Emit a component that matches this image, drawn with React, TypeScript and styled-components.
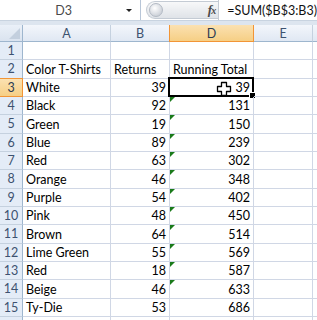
import { Fragment } from "react";
import styled, { createGlobalStyle } from "styled-components";

const GlobalStyle = createGlobalStyle`
    html, body {
        margin: 0;
        padding: 0;
        background: #ffffff;
        overflow: hidden;
    }
`;

const Page = styled.div`
    width: 317px;
    height: 320px;
    overflow: hidden;
    font-family: "Lato", "Liberation Sans", sans-serif;
`;

// formula bar
const FormulaBar = styled.div`
    display: flex;
    height: 20px;
    background: #ffffff;
`;

const NameBox = styled.div`
    width: 143px;
    box-sizing: border-box;
    border-right: 1px solid #b8c6d8;
    display: flex;
    align-items: center;
    font-size: 12.5px;
    color: #4a4a4a;
`;

const NameText = styled.span`
    flex: 1;
    text-align: center;
    padding-left: 2px;
`;

const DropArrow = styled.span`
    width: 0;
    height: 0;
    margin-right: 8px;
    border-left: 3px solid transparent;
    border-right: 3px solid transparent;
    border-top: 3px solid #202020;
`;

const Splitter = styled.div`
    width: 79px;
    display: flex;
    align-items: center;
    padding-left: 5px;
    box-sizing: border-box;
`;

const Pill = styled.div`
    flex: 1;
    height: 18px;
    border-radius: 9px 0 0 9px;
    background: linear-gradient(#f7f8f9, #dfe3e8);
    border: 1px solid #c4cbd4;
    border-right: none;
    display: flex;
    align-items: center;
    justify-content: space-between;
    box-sizing: border-box;
`;

const Knob = styled.div`
    width: 12px;
    height: 12px;
    margin-left: 2px;
    border-radius: 50%;
    background: radial-gradient(circle at 40% 35%, #ffffff, #c9ced6 80%);
    border: 1px solid #b3bac4;
`;

const Fx = styled.span`
    margin-right: 3px;
    font-family: "Liberation Serif", serif;
    font-style: italic;
    font-weight: bold;
    font-size: 13px;
    color: #4a4a4a;
    letter-spacing: -1px;

    & small {
        font-size: 10px;
    }
`;

const FormulaText = styled.div`
    flex: 1;
    display: flex;
    align-items: center;
    padding-left: 8px;
    font-size: 12.5px;
    color: #111;
    border-left: 1px solid #c4cbd4;
`;

const Band = styled.div`
    height: 5px;
    background: #dde5ef;
    border-top: 1px solid #c8d3e0;
    box-sizing: border-box;
`;

// sheet
const Sheet = styled.div`
    display: grid;
    grid-template-columns: 23px 88px 59px 84px 59px 1fr;
    grid-template-rows: 17px;
    grid-auto-rows: 18.33px;
`;

const Corner = styled.div`
    position: relative;
    background: linear-gradient(#eaf0f8, #dae3ef);
    border-right: 1px solid #9eb6ce;
    border-bottom: 1px solid #9eb6ce;
    box-sizing: border-box;

    &::after {
        content: "";
        position: absolute;
        right: 2px;
        bottom: 2px;
        border-left: 11px solid transparent;
        border-bottom: 11px solid #c3cfde;
    }
`;

const ColHead = styled.div<{ $active?: boolean }>`
    display: flex;
    align-items: center;
    justify-content: center;
    font-size: 12.5px;
    color: ${(p) => (p.$active ? "#2b3b52" : "#3d5270")};
    background: ${(p) =>
        p.$active
            ? "linear-gradient(#fbe1b1, #f6cf85)"
            : "linear-gradient(#f3f6fb, #e0e8f3)"};
    border-right: 1px solid ${(p) => (p.$active ? "#f29536" : "#c5d1df")};
    border-left: ${(p) => (p.$active ? "1px solid #f29536" : "none")};
    border-bottom: 1px solid ${(p) => (p.$active ? "#f29536" : "#9eb6ce")};
    margin-left: ${(p) => (p.$active ? "-1px" : "0")};
    box-sizing: border-box;
`;

const RowHead = styled.div<{ $active?: boolean }>`
    display: flex;
    align-items: center;
    justify-content: center;
    font-size: 12.5px;
    color: ${(p) => (p.$active ? "#2b3b52" : "#3d5270")};
    background: ${(p) => (p.$active ? "linear-gradient(#fbe1b1, #f6cf85)" : "#e4ecf7")};
    border-right: 1px solid ${(p) => (p.$active ? "#f29536" : "#9eb6ce")};
    border-bottom: 1px solid ${(p) => (p.$active ? "#f29536" : "#c5d1df")};
    border-top: ${(p) => (p.$active ? "1px solid #f29536" : "none")};
    margin-top: ${(p) => (p.$active ? "-1px" : "0")};
    box-sizing: border-box;
`;

const Cell = styled.div<{ $right?: boolean; $flag?: boolean }>`
    position: relative;
    display: flex;
    align-items: flex-end;
    justify-content: ${(p) => (p.$right ? "flex-end" : "flex-start")};
    padding: 0 3px 1px 3px;
    font-size: 12.5px;
    line-height: 15px;
    color: #000;
    white-space: nowrap;
    border-right: 1px solid #d0d7e5;
    border-bottom: 1px solid #d0d7e5;
    box-sizing: border-box;

    &::before {
        content: "";
        display: ${(p) => (p.$flag ? "block" : "none")};
        position: absolute;
        left: 0;
        top: 0;
        border-top: 5px solid #1a7a1a;
        border-right: 5px solid transparent;
    }
`;

const Selection = styled.div`
    position: absolute;
    left: -2px;
    top: -2px;
    right: -1px;
    bottom: -1px;
    border: 2px solid #000;
    pointer-events: none;
`;

const FillHandle = styled.div`
    position: absolute;
    right: -4px;
    bottom: -4px;
    width: 5px;
    height: 5px;
    background: #000;
    border: 1px solid #fff;
`;

const Cursor = styled.svg`
    position: absolute;
    left: 46px;
    top: 2px;
`;

const names = [
    "Color T-Shirts", "White", "Black", "Green", "Blue", "Red", "Orange",
    "Purple", "Pink", "Brown", "Lime Green", "Red", "Beige", "Ty-Die",
];
const returns = [39, 92, 19, 89, 63, 46, 54, 48, 64, 55, 18, 46, 53];
const totals = returns.map((_, i) => returns.slice(0, i + 1).reduce((a, b) => a + b, 0));

const App: React.FC = () => {
    const rows = Array.from({ length: 16 }, (_, i) => i + 1);
    return (
        <>
            <GlobalStyle />
            <Page>
                <FormulaBar>
                    <NameBox>
                        <NameText>D3</NameText>
                        <DropArrow />
                    </NameBox>
                    <Splitter>
                        <Pill>
                            <Knob />
                            <Fx>
                                f<small>x</small>
                            </Fx>
                        </Pill>
                    </Splitter>
                    <FormulaText>=SUM($B$3:B3)</FormulaText>
                </FormulaBar>
                <Band />
                <Sheet>
                    <Corner />
                    <ColHead>A</ColHead>
                    <ColHead>B</ColHead>
                    <ColHead $active>D</ColHead>
                    <ColHead>E</ColHead>
                    <ColHead />
                    {rows.map((r) => {
                        const idx = r - 2;
                        const isHeader = r === 2;
                        const isData = r >= 3 && r <= 15;
                        const isSel = r === 3;
                        // row 16 only peeks in at the bottom edge, its number is hidden
                        return (
                            <Fragment key={r}>
                                <RowHead $active={isSel}>{r <= 15 ? r : ""}</RowHead>
                                <Cell>{idx >= 0 && idx < names.length ? names[idx] : ""}</Cell>
                                <Cell $right={isData}>
                                    {isHeader ? "Returns" : isData ? returns[r - 3] : ""}
                                </Cell>
                                <Cell $right={isData} $flag={r >= 4 && r <= 14}>
                                    {isHeader ? "Running Total" : isData ? totals[r - 3] : ""}
                                    {isSel && (
                                        <>
                                            <Selection>
                                                <FillHandle />
                                            </Selection>
                                            <Cursor width="16" height="16" viewBox="0 0 16 16">
                                                <path
                                                    d="M5.5 1.5h5v4h4v5h-4v4h-5v-4h-4v-5h4z"
                                                    fill="#fff"
                                                    stroke="#000"
                                                    strokeWidth="1.3"
                                                    strokeLinejoin="round"
                                                />
                                            </Cursor>
                                        </>
                                    )}
                                </Cell>
                                <Cell />
                                <Cell />
                            </Fragment>
                        );
                    })}
                </Sheet>
            </Page>
        </>
    );
};

export default App;
